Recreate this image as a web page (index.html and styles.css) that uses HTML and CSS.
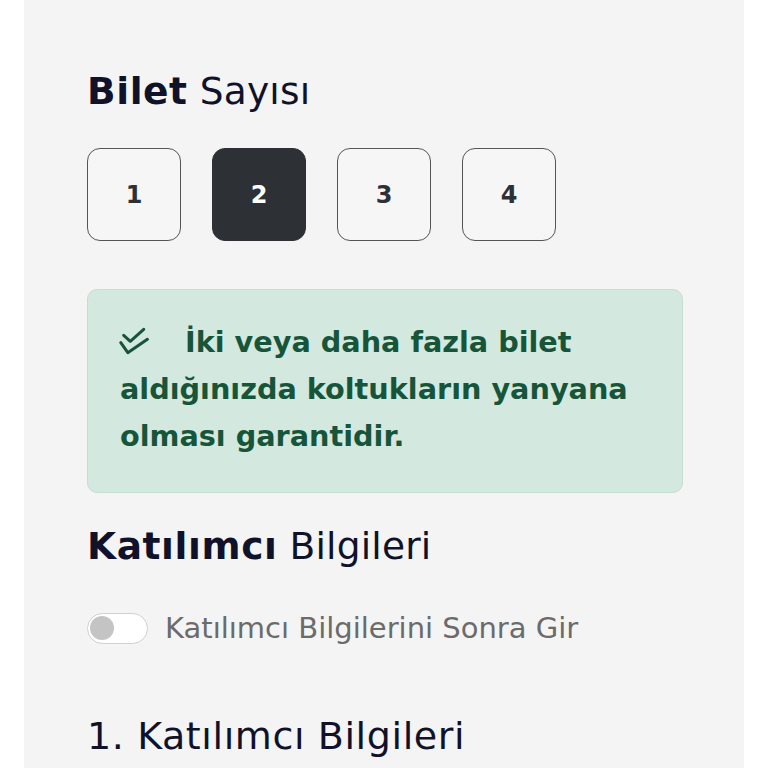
FILE: index.html
```html
<!DOCTYPE html>
<html lang="tr">
<head>
<meta charset="utf-8">
<link rel="stylesheet" href="styles.css">
</head>
<body>
<main class="card">
  <h2 class="title"><b>Bilet</b> Sayısı</h2>
  <div class="counts">
    <button class="count">1</button>
    <button class="count active">2</button>
    <button class="count">3</button>
    <button class="count">4</button>
  </div>
  <div class="notice">
    <p><svg class="checks" viewBox="0 0 30 30" width="30" height="30" aria-hidden="true"><path d="M4.7 8.3l6.6 6 13.4-12M1.8 15.7l7 10 19.6-13.4" fill="none" stroke="currentColor" stroke-width="3" stroke-linecap="round" stroke-linejoin="round"/></svg>İki veya daha fazla bilet aldığınızda koltukların yanyana olması garantidir.</p>
  </div>
  <h2 class="title section"><b>Katılımcı</b> Bilgileri</h2>
  <label class="toggle-row">
    <span class="toggle"><span class="knob"></span></span>
    <span class="toggle-label">Katılımcı Bilgilerini Sonra Gir</span>
  </label>
  <h3 class="subtitle">1. Katılımcı Bilgileri</h3>
</main>
</body>
</html>
```
FILE: styles.css
```css
html, body {
  margin: 0;
  padding: 0;
  background: #ffffff;
}
body {
  font-family: "DejaVu Sans", Inter, sans-serif;
  color: #10122a;
}
.card {
  margin: 0 24px;
  background: #f4f4f4;
  min-height: 768px;
  padding: 68px 63px 0;
  box-sizing: border-box;
}
.title {
  margin: 0;
  font-size: 37.5px;
  line-height: 46px;
  font-weight: 400;
  letter-spacing: 0.2px;
  color: #10122a;
}
.title b {
  font-weight: 700;
  letter-spacing: 0.6px;
}
.counts {
  display: flex;
  gap: 31px;
  margin-top: 34px;
}
.count {
  width: 94px;
  height: 93px;
  border: 1.5px solid #555555;
  border-radius: 13px;
  background: #f6f6f6;
  font-family: inherit;
  font-size: 24px;
  font-weight: 700;
  color: #2d3035;
  padding: 0;
}
.count.active {
  background: #2d3035;
  border-color: #2d3035;
  color: #ffffff;
}
.notice {
  margin-top: 48px;
  width: 596px;
  box-sizing: border-box;
  background: #d3e8df;
  border: 1px solid #c7ddd3;
  border-radius: 10px;
  padding: 29px 32px 32px;
}
.notice p {
  margin: 0;
  font-size: 28.7px;
  line-height: 47px;
  font-weight: 700;
  color: #17553a;
}
.checks {
  vertical-align: -5px;
  margin-left: -1px;
  margin-right: 36px;
  color: #17553a;
}
.section {
  margin-top: 30px;
}
.toggle-row {
  display: flex;
  align-items: center;
  gap: 17px;
  margin-top: 42px;
}
.toggle {
  width: 61px;
  height: 31px;
  box-sizing: border-box;
  border: 1.5px solid #d0d0d0;
  border-radius: 16px;
  background: #ffffff;
  display: flex;
  align-items: center;
  padding-left: 2px;
}
.knob {
  width: 24px;
  height: 24px;
  border-radius: 50%;
  background: #c4c4c4;
}
.toggle-label {
  font-size: 29px;
  color: #6b6b6b;
}
.subtitle {
  margin: 68px 0 0;
  font-size: 38px;
  line-height: 46px;
  font-weight: 400;
  letter-spacing: 0.6px;
  color: #10122a;
}
```
